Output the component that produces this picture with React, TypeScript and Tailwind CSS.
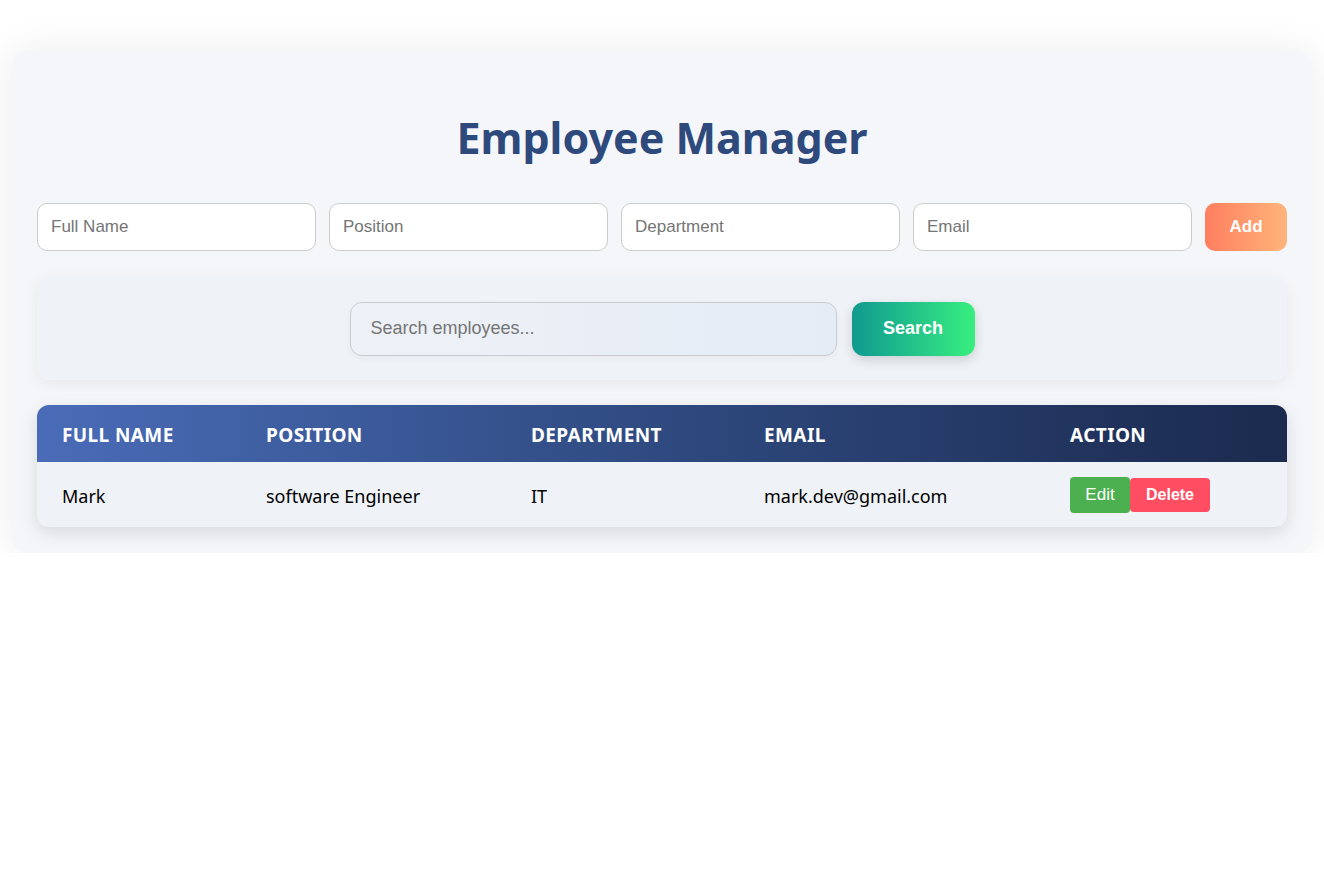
import React from "react";

export default function App() {
  const seg = { fontFamily: '"Noto Sans", "Open Sans", sans-serif' };
  const arial = { fontFamily: '"Liberation Sans", Arial, sans-serif' };
  const inputCls =
    "flex-1 min-w-0 h-[48px] rounded-[10px] border border-[#cccccc] bg-white px-[13px] text-[17px] text-[#333] placeholder:text-[#757575] outline-none";
  return (
    <div className="bg-white pt-[50px]" style={seg}>
      <div className="mx-auto w-[1300px] rounded-[16px] bg-[#f5f6fa] px-[25px] pb-[26px] pt-[58px] shadow-[0_0_40px_rgba(0,0,0,0.08)]">
        <h1 className="mb-[35px] h-[60px] text-center text-[43px] font-bold leading-[60px] text-[#2e4a7d]" style={seg}>
          Employee Manager
        </h1>
        <div className="flex gap-[13px]" style={arial}>
          <input className={inputCls} placeholder="Full Name" style={arial} />
          <input className={inputCls} placeholder="Position" style={arial} />
          <input className={inputCls} placeholder="Department" style={arial} />
          <input className={inputCls} placeholder="Email" style={arial} />
          <button className="h-[48px] w-[82px] shrink-0 rounded-[10px] bg-gradient-to-r from-[#ff7e5f] to-[#feb47b] text-[17px] font-bold text-white" style={arial}>
            Add
          </button>
        </div>
        <div className="mt-[26px] flex h-[103px] items-center justify-center gap-[15px] rounded-[12px] bg-[#eff2f7] shadow-[0_4px_15px_rgba(0,0,0,0.06)]">
          <input
            className="h-[54px] w-[487px] rounded-[12px] border border-[#cccccc] bg-gradient-to-r from-[#eef1f7] to-[#e5ecf6] px-[20px] text-[18px] text-[#333] placeholder:text-[#757575] outline-none shadow-[0_2px_6px_rgba(0,0,0,0.04)]"
            placeholder="Search employees..."
            style={arial}
          />
          <button
            className="h-[54px] w-[123px] rounded-[12px] bg-gradient-to-r from-[#11998e] to-[#38ef7d] text-[18px] font-bold text-white shadow-[0_4px_12px_rgba(0,0,0,0.15)]"
            style={arial}
          >
            Search
          </button>
        </div>
        <div className="mt-[25px] overflow-hidden rounded-[12px] bg-[#eff2f7] shadow-[0_6px_18px_rgba(0,0,0,0.12)]">
          <table className="w-full table-fixed border-collapse text-left">
            <colgroup>
              <col className="w-[204px]" />
              <col className="w-[265px]" />
              <col className="w-[233px]" />
              <col className="w-[306px]" />
              <col />
            </colgroup>
            <thead>
              <tr className="h-[57px] bg-gradient-to-r from-[#4a6cb8] via-[#2f4a80] to-[#1b2a4e] text-[19px] font-bold uppercase tracking-[0.4px] text-white">
                <th className="pl-[25px] pt-[4px] font-bold">Full Name</th>
                <th className="pl-[25px] pt-[4px] font-bold">Position</th>
                <th className="pl-[25px] pt-[4px] font-bold">Department</th>
                <th className="pl-[25px] pt-[4px] font-bold">Email</th>
                <th className="pl-[25px] pt-[4px] font-bold">Action</th>
              </tr>
            </thead>
            <tbody>
              <tr className="h-[65px] text-[18px] text-black">
                <td className="pl-[25px] pt-[4px]">Mark</td>
                <td className="pl-[25px] pt-[4px]">software Engineer</td>
                <td className="pl-[25px] pt-[4px]">IT</td>
                <td className="pl-[25px] pt-[4px]">mark.dev@gmail.com</td>
                <td className="pl-[25px]">
                  <div className="flex items-center" style={arial}>
                    <button className="h-[36px] w-[60px] rounded-[4px] bg-[#4caf50] text-[17px] text-white">Edit</button>
                    <button className="h-[34px] w-[80px] rounded-[4px] bg-[#ff4d62] text-[16px] font-bold text-white">Delete</button>
                  </div>
                </td>
              </tr>
            </tbody>
          </table>
        </div>
      </div>
    </div>
  );
}
